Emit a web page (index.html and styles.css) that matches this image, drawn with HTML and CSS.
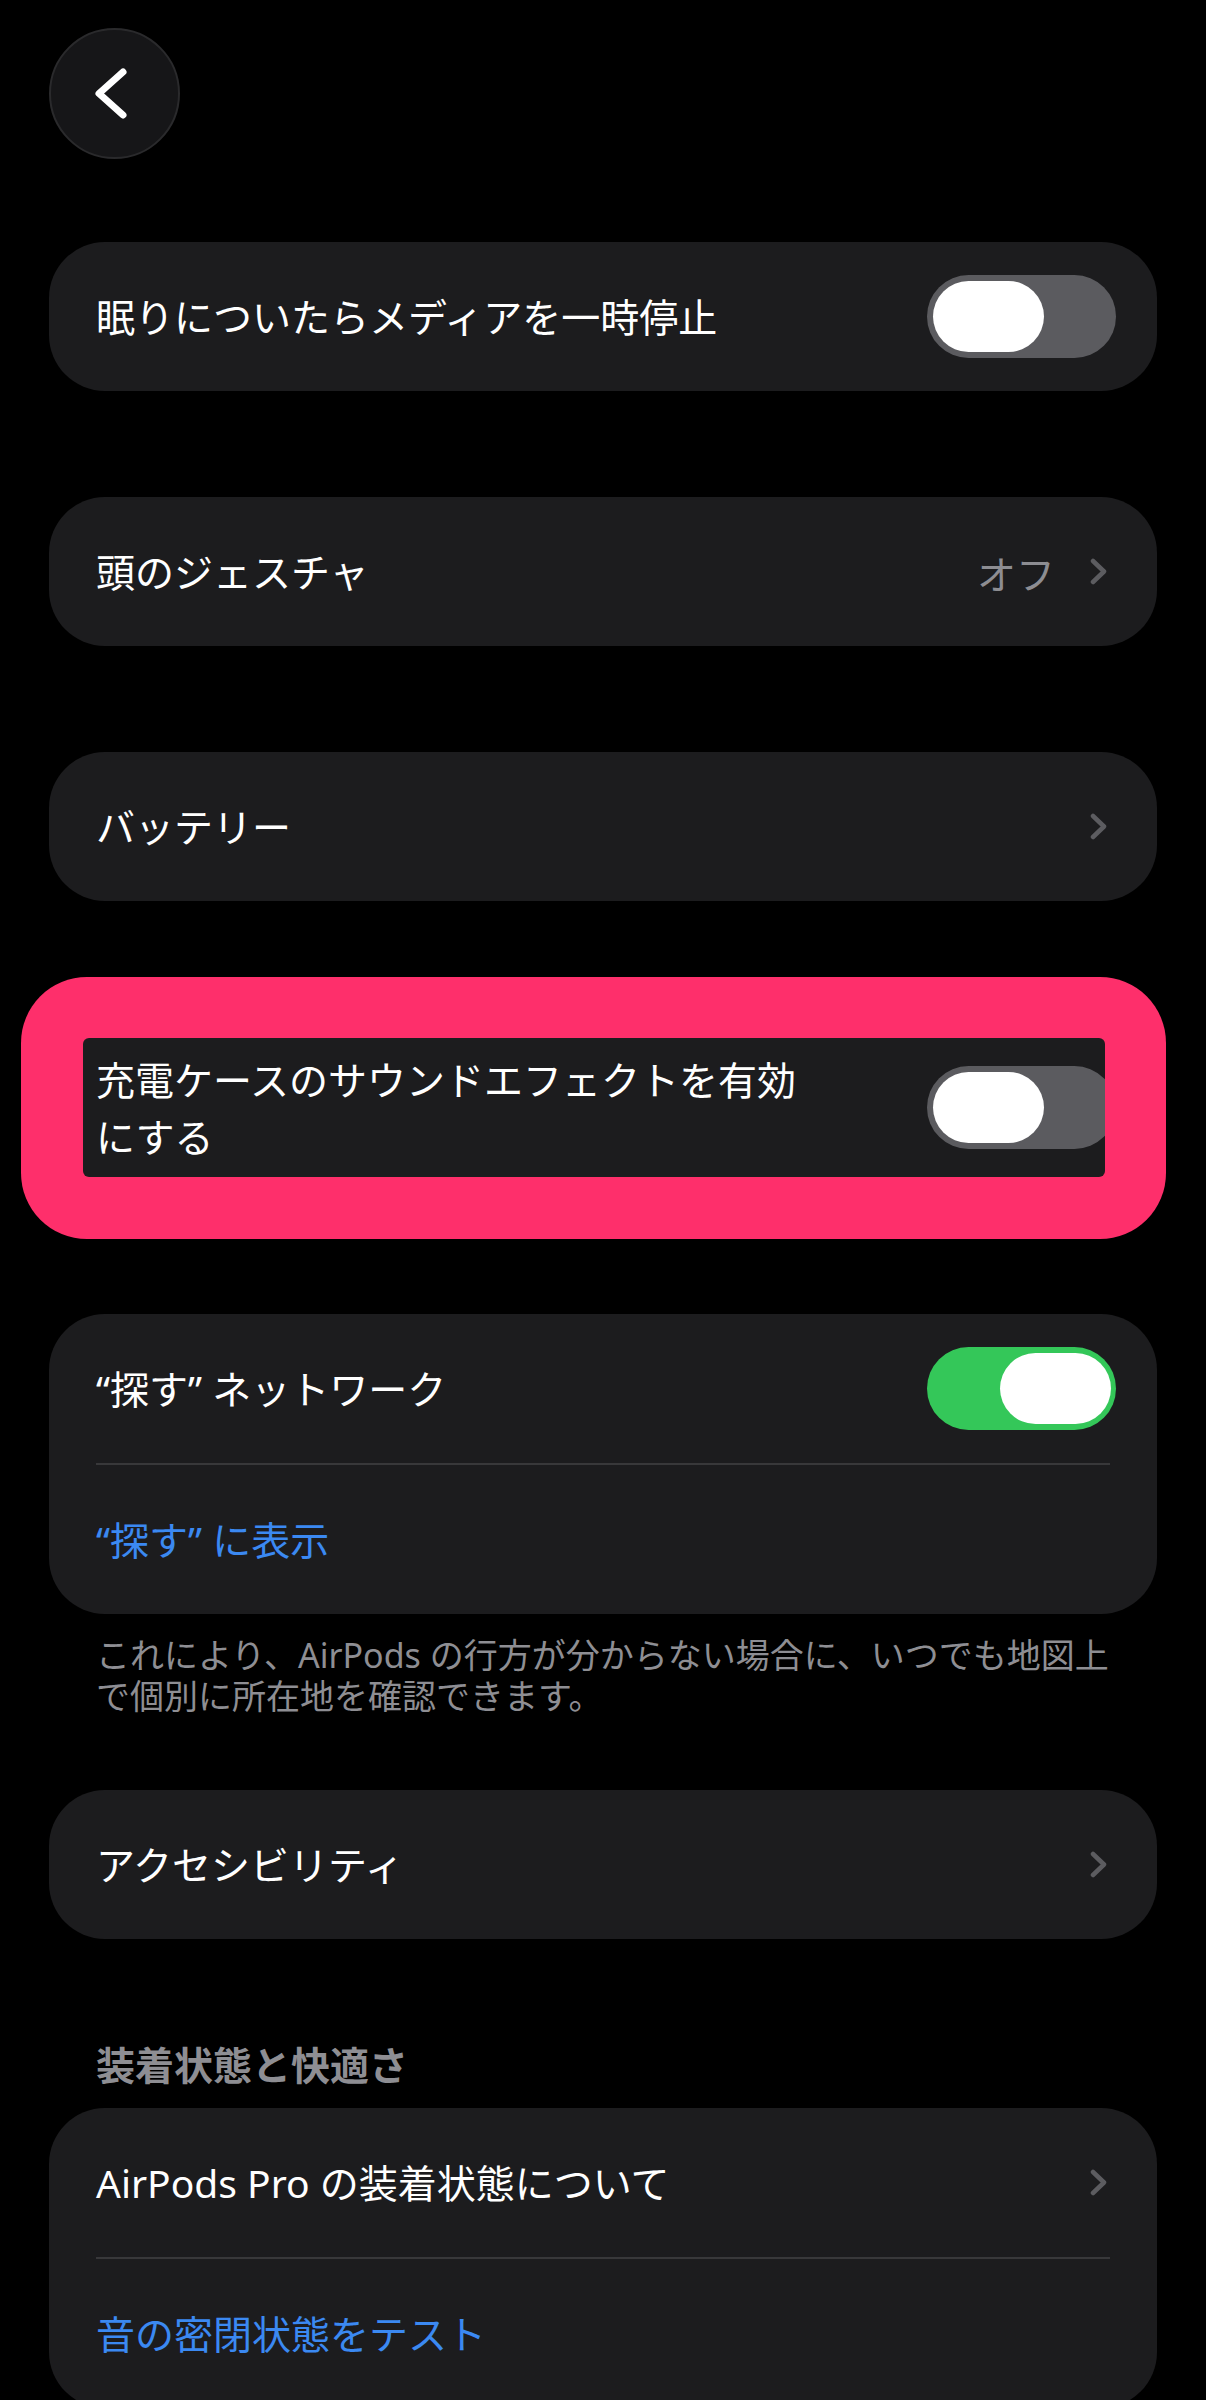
FILE: index.html
```html
<!DOCTYPE html>
<html lang="ja">
    <head>
        <meta charset="UTF-8" />
        <meta name="viewport" content="width=device-width, initial-scale=1.0" />
        <title>AirPods Pro</title>
        <link rel="stylesheet" href="styles.css">
    </head>
    <body>
        <div class="screen">
            <div class="back-btn">
                <svg width="127" height="127" viewBox="0 0 127 127">
                    <path d="M72 42 L48 63.5 L72 85" />
                </svg>
            </div>

            <!-- sleep detection -->
            <section class="card card-first">
                <div class="row">
                    <span class="label">眠りについたらメディアを一時停止</span>
                    <span class="switch"><span class="knob"></span></span>
                </div>
            </section>

            <section class="card card-gap">
                <div class="row">
                    <span class="label">頭のジェスチャ</span>
                    <span class="trail">
                        <span class="value">オフ</span>
                        <svg class="chev" width="17" height="27" viewBox="0 0 17 27"><path d="M3 3 L14 13.5 L3 24" /></svg>
                    </span>
                </div>
            </section>

            <section class="card card-gap">
                <div class="row">
                    <span class="label">バッテリー</span>
                    <svg class="chev" width="17" height="27" viewBox="0 0 17 27"><path d="M3 3 L14 13.5 L3 24" /></svg>
                </div>
            </section>

            <!-- highlighted setting -->
            <div class="highlight">
                <div class="highlight-inner">
                    <span class="label label-wrap">充電ケースのサウンドエフェクトを有効にする</span>
                    <span class="switch"><span class="knob"></span></span>
                </div>
            </div>

            <section class="card card-find">
                <div class="row">
                    <span class="label">“探す” ネットワーク</span>
                    <span class="switch on"><span class="knob"></span></span>
                </div>
                <div class="divider"></div>
                <div class="row">
                    <span class="label link">“探す” に表示</span>
                </div>
            </section>
            <p class="note">これにより、AirPods の行方が分からない場合に、いつでも地図上<br>で個別に所在地を確認できます。</p>

            <section class="card card-access">
                <div class="row">
                    <span class="label">アクセシビリティ</span>
                    <svg class="chev" width="17" height="27" viewBox="0 0 17 27"><path d="M3 3 L14 13.5 L3 24" /></svg>
                </div>
            </section>

            <h2 class="section-title">装着状態と快適さ</h2>
            <section class="card">
                <div class="row">
                    <span class="label">AirPods Pro の装着状態について</span>
                    <svg class="chev" width="17" height="27" viewBox="0 0 17 27"><path d="M3 3 L14 13.5 L3 24" /></svg>
                </div>
                <div class="divider"></div>
                <div class="row">
                    <span class="label link">音の密閉状態をテスト</span>
                </div>
            </section>
        </div>
    </body>
</html>
```

FILE: styles.css
```css
* {
    box-sizing: border-box;
}

html,
body {
    margin: 0;
    padding: 0;
    background: #000000;
}

body {
    color: #ffffff;
    font-family: "Noto Sans", "Noto Sans CJK JP", sans-serif;
}

.screen {
    padding: 28px 49px 0;
    height: 2400px;
    overflow: hidden;
}

.back-btn {
    width: 131px;
    height: 131px;
    border-radius: 50%;
    background: #161618;
    border: 2px solid #2a2a2c;
}

.back-btn svg {
    display: block;
}

.back-btn path {
    fill: none;
    stroke: #ffffff;
    stroke-width: 7;
    stroke-linecap: round;
    stroke-linejoin: round;
}

.card {
    background: #1c1c1e;
    border-radius: 56px;
    overflow: hidden;
}

.card-first {
    margin-top: 83px;
}

.card-gap {
    margin-top: 106px;
}

.card-find {
    margin-top: 75px;
}

.card-access {
    margin-top: 73px;
}

.row {
    display: flex;
    align-items: center;
    justify-content: space-between;
    min-height: 149px;
    padding: 0 41px 0 47px;
}

.label {
    font-size: 39px;
    line-height: 57px;
}

.link {
    color: #3b89f2;
}

.trail {
    display: flex;
    align-items: center;
}

.value {
    font-size: 39px;
    color: #8d8d92;
    margin-right: 35px;
}

.chev {
    display: block;
    margin-right: 9px;
}

.chev path {
    fill: none;
    stroke: #5c5c60;
    stroke-width: 4.5;
    stroke-linecap: round;
    stroke-linejoin: round;
}

.divider {
    height: 2px;
    background: #38383a;
    margin: 0 47px;
}

.switch {
    flex-shrink: 0;
    display: flex;
    align-items: center;
    width: 189px;
    height: 83px;
    padding: 0 6px;
    border-radius: 42px;
    background: #5b5b5f;
}

.switch.on {
    justify-content: flex-end;
    padding-right: 5px;
    background: #34c759;
}

.knob {
    width: 111px;
    height: 71px;
    border-radius: 36px;
    background: #ffffff;
}

.highlight {
    margin: 76px -9px 0 -28px;
    padding: 61px 61px 62px 62px;
    border-radius: 66px;
    background: #fe2f6b;
}

.highlight-inner {
    display: flex;
    align-items: center;
    justify-content: space-between;
    height: 139px;
    padding-left: 13px;
    border-radius: 6px;
    background: #1c1c1e;
    overflow: hidden;
}

.highlight-inner .switch {
    margin-right: -11px;
}

.label-wrap {
    width: 720px;
}

.note {
    margin: 21px 0 0;
    padding: 0 40px 0 47px;
    font-size: 34px;
    line-height: 41px;
    color: #8e8e93;
    white-space: nowrap;
}

.section-title {
    margin: 101px 0 18px;
    padding-left: 47px;
    font-size: 39px;
    font-weight: 700;
    line-height: 50px;
    color: #8e8e93;
}
```
